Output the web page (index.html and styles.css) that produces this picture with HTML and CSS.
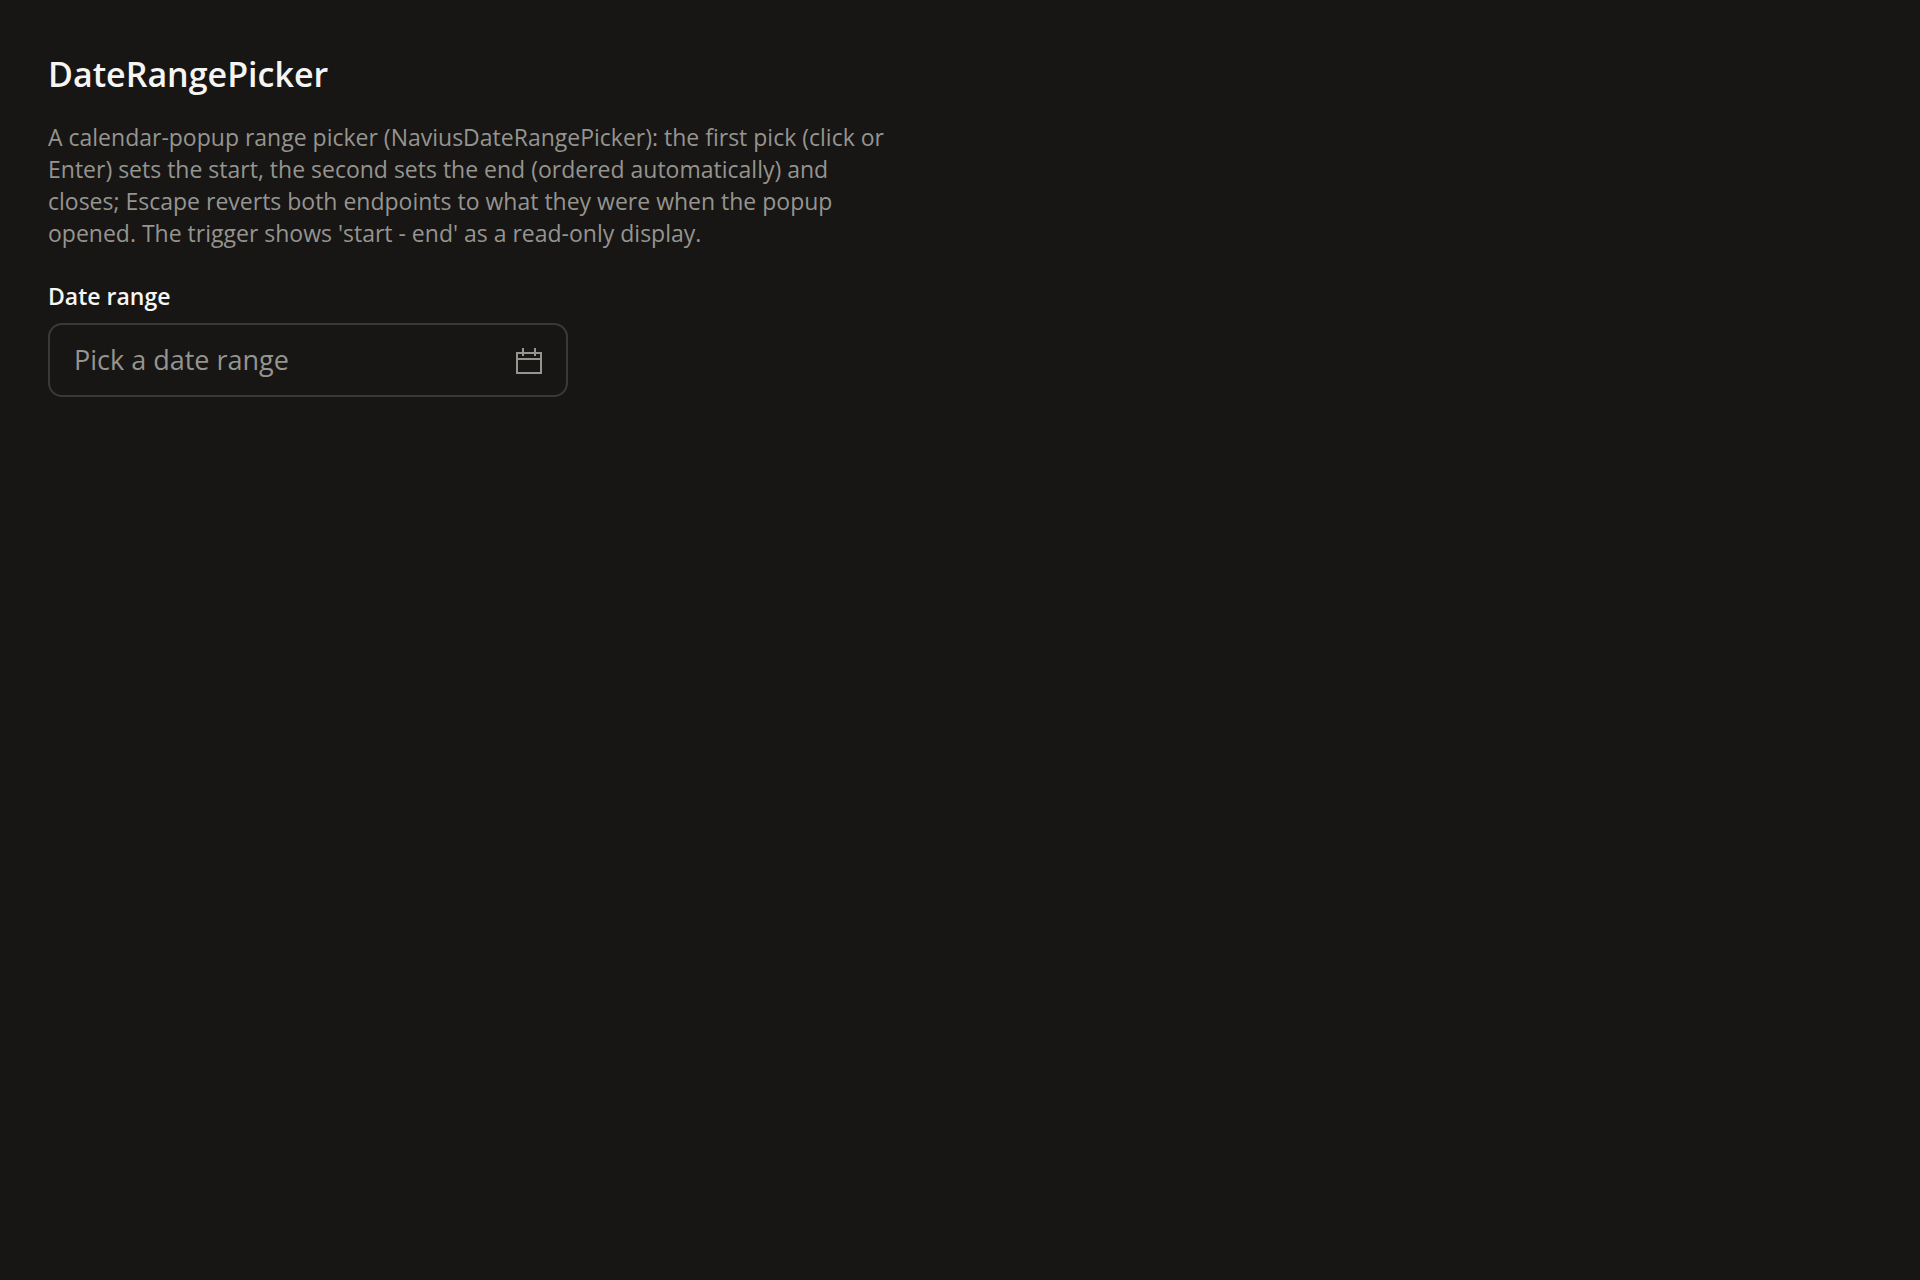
FILE: index.html
```html
<!DOCTYPE html>
<html lang="en">
<head>
    <meta charset="UTF-8">
    <meta name="viewport" content="width=device-width, initial-scale=1.0">
    <title>DateRangePicker</title>
    <link rel="stylesheet" href="styles.css">
</head>
<body>
    <main class="page">
        <h1 class="title">DateRangePicker</h1>
        <p class="description">A calendar-popup range picker (NaviusDateRangePicker): the first pick (click or Enter) sets the start, the second sets the end (ordered automatically) and closes; Escape reverts both endpoints to what they were when the popup opened. The trigger shows 'start - end' as a read-only display.</p>
        <div class="field">
            <label class="field-label" for="date-range">Date range</label>
            <button type="button" class="trigger" id="date-range" aria-haspopup="dialog">
                <span class="placeholder">Pick a date range</span>
                <svg class="icon" viewBox="0 0 28 28" aria-hidden="true">
                    <path d="M3 7H27V27H3ZM3 13H27M9 2V10M21 2V10"/>
                </svg>
            </button>
        </div>
    </main>
</body>
</html>
```
FILE: styles.css
```css
body {
    margin: 0;
    background-color: #171614;
    color: #f5f5f4;
    font-family: "Open Sans", "Noto Sans", sans-serif;
}
.page {
    padding: 48px;
}
.title {
    margin: 0 0 21px;
    font-size: 34px;
    font-weight: 600;
    line-height: 52px;
}
.description {
    max-width: 848px;
    margin: 0 0 31px;
    color: #96948f;
    font-size: 23px;
    line-height: 32px;
}
.field {
    max-width: 520px;
}
.field-label {
    display: block;
    margin-bottom: 11px;
    font-size: 23px;
    font-weight: 600;
    line-height: 32px;
}
.trigger {
    display: flex;
    align-items: center;
    justify-content: space-between;
    width: 100%;
    padding: 16px 24px;
    border: 2px solid #3a3936;
    border-radius: 14px;
    background: transparent;
    color: #96948f;
    font: inherit;
    font-size: 27px;
    line-height: 38px;
    cursor: pointer;
}
.icon {
    width: 28px;
    height: 28px;
    fill: none;
    stroke: currentColor;
    stroke-width: 2;
}
```
